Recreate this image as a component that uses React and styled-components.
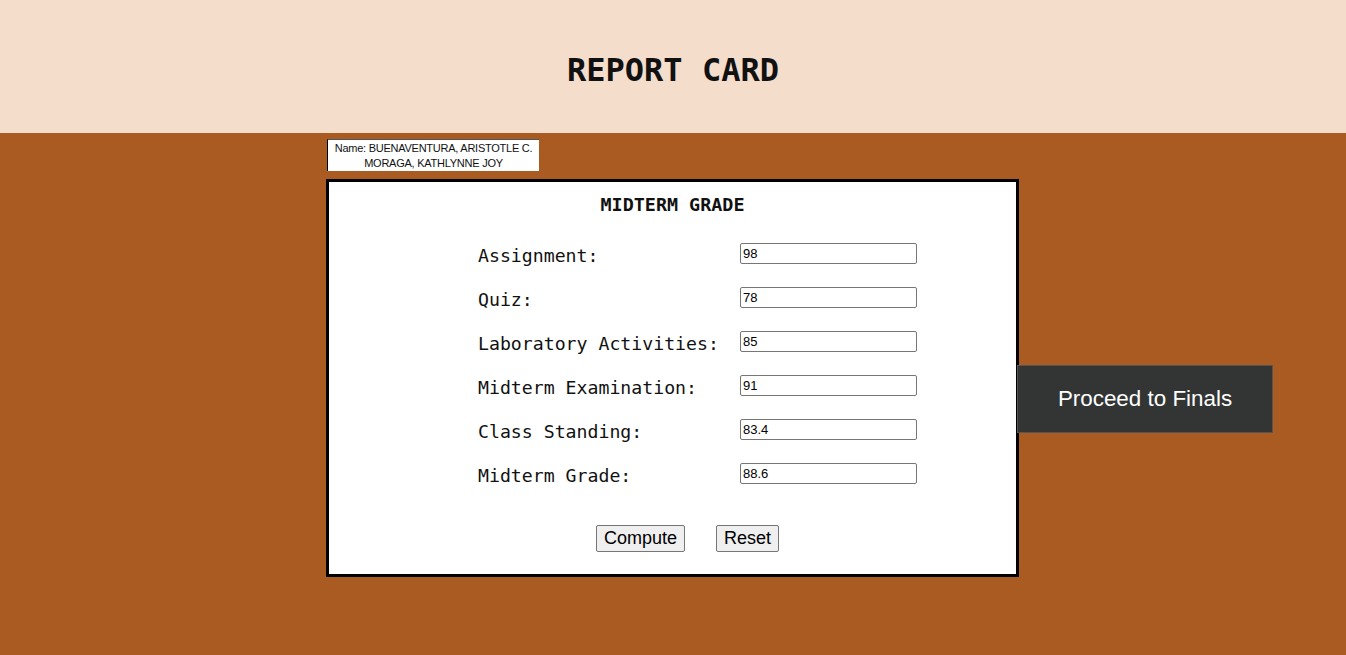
import React from 'react';
import styled, { createGlobalStyle } from 'styled-components';

const GlobalStyle = createGlobalStyle`
    html, body {
        margin: 0;
        padding: 0;
        background: #a95b22;
    }
    body {
        font-family: "Liberation Sans", Arial, sans-serif;
    }
`;

const Page = styled.div`
    width: 1346px;
    height: 655px;
    background: #a95b22;
    overflow: hidden;
`;

const Header = styled.header`
    height: 133px;
    background: #f5ddcc;
    display: flex;
    align-items: center;
    justify-content: center;
`;

const Title = styled.h1`
    margin: 0;
    padding-top: 6px;
    font-family: "DejaVu Sans Mono", monospace;
    font-size: 32px;
    font-weight: bold;
    color: #111;
`;

const Main = styled.main`
    display: grid;
    grid-template-columns: 1fr auto 1fr;
    padding: 6px 1px 0 0;
`;

const Center = styled.div`
    grid-column: 2;
    display: flex;
    flex-direction: column;
    align-items: flex-start;
`;

const NameTag = styled.div`
    margin-left: 1px;
    width: 212px;
    height: 32px;
    background: #fff;
    border-left: 1px solid #000;
    border-top: 1px solid #555;
    font-size: 11px;
    letter-spacing: -0.25px;
    line-height: 15px;
    text-align: center;
    color: #111;
    box-sizing: border-box;
    padding-top: 1px;
`;

const Card = styled.section`
    margin-top: 8px;
    width: 693px;
    height: 398px;
    box-sizing: border-box;
    border: 3px solid #000;
    background: #fff;
    display: flex;
    flex-direction: column;
    align-items: center;
`;

const CardTitle = styled.h2`
    margin: 12px 0 0;
    font-family: "DejaVu Sans Mono", monospace;
    font-size: 18.4px;
    font-weight: bold;
    color: #111;
`;

const Form = styled.div`
    align-self: flex-start;
    margin: 26px 0 0 149px;
    display: grid;
    grid-template-columns: 262px 177px;
    row-gap: 19px;
    align-items: center;
`;

const Label = styled.label`
    font-family: "DejaVu Sans Mono", monospace;
    font-size: 18.2px;
    line-height: 21px;
    padding-top: 4px;
    color: #111;
`;

const Field = styled.input`
    width: 177px;
    height: 21px;
    box-sizing: border-box;
    border: 1px solid #767676;
    border-radius: 2px;
    padding: 0 2px;
    font-family: "Liberation Sans", Arial, sans-serif;
    font-size: 13px;
    color: #000;
    background: #fff;
`;

const Actions = styled.div`
    margin: 39px 0 0 30px;
    display: flex;
    gap: 31px;
`;

const Button = styled.button`
    height: 27px;
    padding: 0 7px;
    font-family: "Liberation Sans", Arial, sans-serif;
    font-size: 18px;
    color: #000;
    background: #efefef;
    border: 1px solid #767676;
    border-radius: 2px;
`;

const Side = styled.div`
    grid-column: 3;
    display: flex;
    align-items: flex-start;
`;

const Proceed = styled.button`
    margin-top: 226px;
    margin-left: -2px;
    width: 256px;
    height: 68px;
    background: #333535;
    border: 1px solid #555;
    color: #fff;
    font-family: "Liberation Sans", Arial, sans-serif;
    font-size: 22.4px;
`;

const rows = [
    ['Assignment:', '98'],
    ['Quiz:', '78'],
    ['Laboratory Activities:', '85'],
    ['Midterm Examination:', '91'],
    ['Class Standing:', '83.4'],
    ['Midterm Grade:', '88.6'],
];

export default function App() {
    return (
        <Page>
            <GlobalStyle />
            <Header>
                <Title>REPORT CARD</Title>
            </Header>
            <Main>
                <Center>
                    <NameTag>
                        Name: BUENAVENTURA, ARISTOTLE C.<br />
                        MORAGA, KATHLYNNE JOY
                    </NameTag>
                    <Card>
                        <CardTitle>MIDTERM GRADE</CardTitle>
                        <Form>
                            {rows.map(([label, value]) => (
                                <React.Fragment key={label}>
                                    <Label>{label}</Label>
                                    <Field type="text" defaultValue={value} />
                                </React.Fragment>
                            ))}
                        </Form>
                        <Actions>
                            <Button>Compute</Button>
                            <Button>Reset</Button>
                        </Actions>
                    </Card>
                </Center>
                <Side>
                    <Proceed>Proceed to Finals</Proceed>
                </Side>
            </Main>
        </Page>
    );
}
